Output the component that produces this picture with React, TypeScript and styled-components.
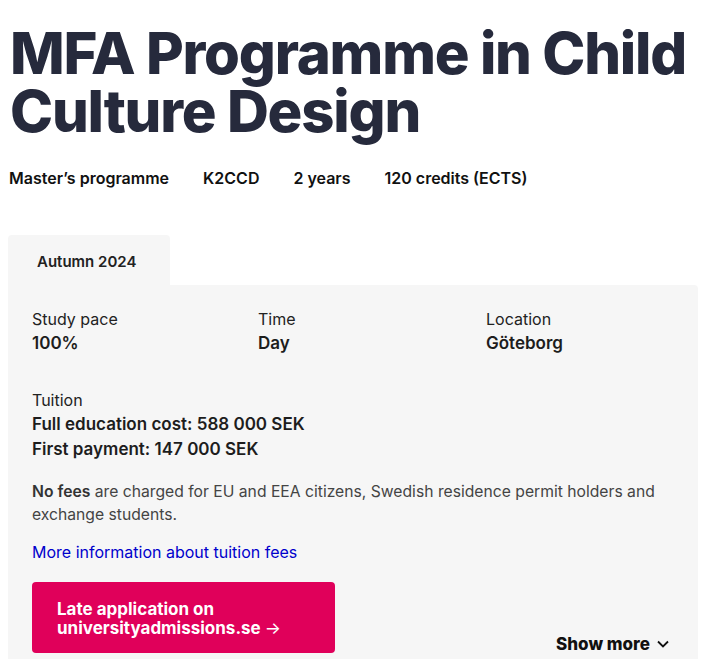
import styled, { createGlobalStyle } from "styled-components";

const GlobalStyle = createGlobalStyle`
    body {
        margin: 0;
        background: #fff;
        font-family: Inter, "Noto Sans", Arial, sans-serif;
        color: #1d1d1d;
    }
`;

export default function App() {
    const facts = [
        { label: "Study pace", value: "100%" },
        { label: "Time", value: "Day" },
        { label: "Location", value: "Göteborg" },
    ];

    return (
        <Page>
            <GlobalStyle />
            <Title>MFA Programme in Child Culture Design</Title>
            <Meta>
                <span>Master’s programme</span>
                <span>K2CCD</span>
                <span>2 years</span>
                <span>120 credits (ECTS)</span>
            </Meta>
            <Tabs>
                <Tab>Autumn 2024</Tab>
            </Tabs>
            <Panel>
                <Facts>
                    {facts.map(item => (
                        <Fact key={item.label}>
                            <Label>{item.label}</Label>
                            <Value>{item.value}</Value>
                        </Fact>
                    ))}
                </Facts>
                <Tuition>
                    <Label>Tuition</Label>
                    <Value>Full education cost: 588 000 SEK</Value>
                    <Value>First payment: 147 000 SEK</Value>
                </Tuition>
                <Note>
                    <b>No fees</b> are charged for EU and EEA citizens, Swedish residence permit holders and exchange students.
                </Note>
                <MoreLink href="#">More information about tuition fees</MoreLink>
                <Bottom>
                    <ApplyButton href="#">
                        Late application on<br />universityadmissions.se <Arrow>→</Arrow>
                    </ApplyButton>
                    <ShowMore>
                        Show more
                        <svg width="14" height="14" viewBox="0 0 14 14" fill="none">
                            <path d="M2 4.5 L7 9.5 L12 4.5" stroke="#111" strokeWidth="1.8" />
                        </svg>
                    </ShowMore>
                </Bottom>
            </Panel>
        </Page>
    );
}

const Page = styled.div`
    padding: 24px 7px 0 8px;
`;

const Title = styled.h1`
    margin: 0 0 0 2px;
    font-size: 58px;
    line-height: 58px;
    font-weight: 800;
    letter-spacing: -1.2px;
    color: #262a3c;
`;

const Meta = styled.div`
    display: flex;
    gap: 34px;
    margin-top: 28px;
    margin-left: 1px;
    font-size: 16px;
    font-weight: 600;
    color: #111;
`;

const Tabs = styled.div`
    display: flex;
    margin-top: 47px;
`;

const Tab = styled.div`
    width: 162px;
    height: 50px;
    box-sizing: border-box;
    padding: 17px 0 0 29px;
    background: #f6f6f6;
    border-radius: 4px 4px 0 0;
    font-size: 15px;
    font-weight: 600;
    color: #222;
`;

const Panel = styled.div`
    background: #f6f6f6;
    border-radius: 0 4px 0 0;
    padding: 23px 25px 6px 24px;
    width: 690px;
    box-sizing: border-box;
`;

const Facts = styled.div`
    display: grid;
    grid-template-columns: 226px 228px 1fr;
`;

const Fact = styled.div`
    display: flex;
    flex-direction: column;
`;

const Label = styled.div`
    font-size: 16px;
    line-height: 23px;
    color: #222;
`;

const Value = styled.div`
    font-size: 17px;
    line-height: 25px;
    font-weight: 600;
    color: #1d1d1d;
`;

const Tuition = styled.div`
    margin-top: 33px;
`;

const Note = styled.p`
    margin: 18px 0 0;
    font-size: 15.7px;
    line-height: 23px;
    color: #444;
    b {
        font-weight: 600;
        color: #333;
    }
`;

const MoreLink = styled.a`
    display: block;
    margin-top: 15px;
    font-size: 16px;
    line-height: 23px;
    color: #0000cc;
    text-decoration: none;
`;

const Bottom = styled.div`
    display: flex;
    justify-content: space-between;
    align-items: flex-end;
    margin-top: 18px;
`;

const ApplyButton = styled.a`
    display: block;
    width: 303px;
    height: 71px;
    box-sizing: border-box;
    padding: 18px 24px 0 25px;
    background: #e0005a;
    border-radius: 4px;
    color: #fff;
    font-size: 17px;
    line-height: 19px;
    font-weight: 700;
    text-decoration: none;
`;

const Arrow = styled.span`
    font-weight: 400;
`;

const ShowMore = styled.button`
    display: flex;
    align-items: center;
    gap: 6px;
    margin: 0 3px -1px 0;
    padding: 0;
    border: 0;
    background: none;
    font-family: inherit;
    font-size: 17px;
    font-weight: 800;
    color: #111;
`;
